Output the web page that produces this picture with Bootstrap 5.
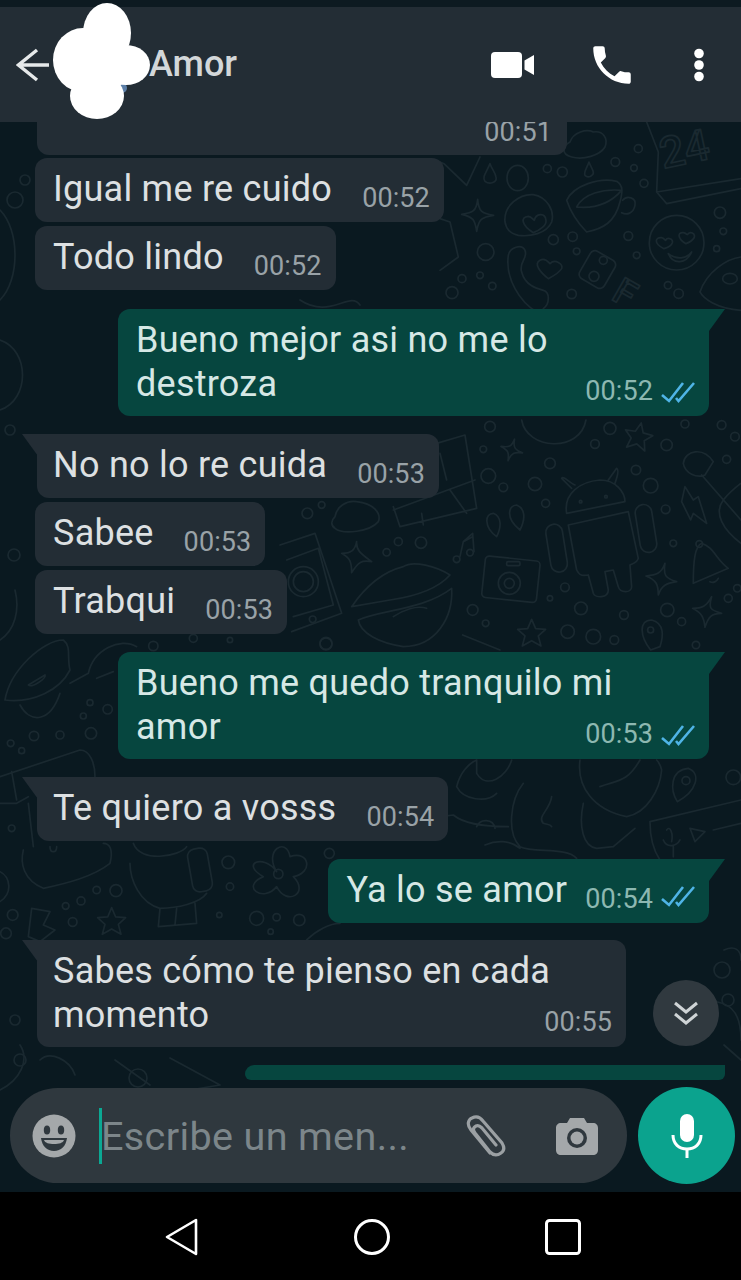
<!DOCTYPE html>
<html lang="es">
<head>
  <meta charset="UTF-8" />
  <meta name="viewport" content="width=device-width, initial-scale=1.0" />
  <title>Amor</title>
  <link href="https://cdn.jsdelivr.net/npm/bootstrap@5.3.3/dist/css/bootstrap.min.css" rel="stylesheet" />
  <style>
    body { margin: 0; background: #000; font-family: Roboto, "Liberation Sans", sans-serif; }
    .screen { width: 741px; height: 1280px; }
    .status-strip { height: 7px; background: #0d1a21; flex: none; }
    .chat-head { height: 115px; background: #232d35; flex: none; padding: 0 36px 0 16px; z-index: 3; }
    .chat-name { font-size: 36px; font-weight: 500; color: #d3d7d9; margin-left: 99px; line-height: 1; padding-bottom: 2px; }
    .head-icons { gap: 52px; }
    .blob { left: 0; top: -7px; z-index: 4; }
    .chat-area { background: #0a1920; flex: 1 1 auto; min-height: 0; }
    .wall { left: 0; top: 0; }
    .wall * { vector-effect: non-scaling-stroke; }
    .wall-lines { fill: none; stroke: #1a2930; stroke-width: 1.7; stroke-linejoin: round; stroke-linecap: round; }
    .wall-label { font-family: Roboto, sans-serif; font-weight: 500; fill: none; stroke: #1a2930; stroke-width: 1.7; }
    .msg-list { z-index: 1; }
    .bubble { color: #dde0e2; background: #232d35; border-radius: 12px; height: 64px; font-size: 36px; line-height: 44px; padding: 9px 14px 0 18px; margin-left: 35px; width: fit-content; flex: none; position: relative; letter-spacing: .25px; white-space: nowrap; }
    .bubble-out { background: #06463f; color: #d6e8e5; margin-left: auto; margin-right: 32px; }
    .bubble-tall { height: 107px; white-space: normal; }
    .bubble-in-first { margin-left: 37px; padding-left: 16px; border-top-left-radius: 0; }
    .bubble-out.bubble-first { border-top-right-radius: 0; }
    .bubble-in-first::before { content: ""; position: absolute; left: -15px; top: 0; border-top: 22px solid #232d35; border-left: 16px solid transparent; }
    .bubble-out.bubble-first::after { content: ""; position: absolute; right: -16px; top: 0; border-top: 22px solid #06463f; border-right: 16px solid transparent; }
    .msg-time { font-size: 27px; line-height: 30px; color: #99a2a7; letter-spacing: .1px; margin-left: 30px; padding-top: 16px; }
    .bubble-out .msg-time { color: #8db8b1; }
    .time-close { margin-left: 18px; }
    .msg-foot { margin-top: -30px; }
    .msg-foot .msg-time { padding-top: 0; }
    .ticks { margin-left: 8px; margin-top: 17px; }
    .msg-foot .ticks { margin-top: 5px; }
    .cut-top { height: 33px; margin-left: 37px; width: 530px; border-top-left-radius: 0; border-top-right-radius: 0; padding: 0 15px 0 0; }
    .cut-top .msg-time { padding-top: 0; line-height: 20px; }
    .peek { height: 15px; width: 480px; background: #06463f; margin: 0 16px 0 auto; border-radius: 12px 0 8px 8px; flex: none; }
    .gap-3px { margin-top: 3px; }
    .gap-4px { margin-top: 4px; }
    .gap-19 { margin-top: 19px; }
    .gap-18 { margin-top: 18px; }
    .gap-17 { margin-top: 17px; }
    .down-btn { width: 66px; height: 66px; background: #30393f; right: 22px; top: 858px; z-index: 2; }
    .composer { left: 10px; right: 6px; top: 966px; z-index: 2; }
    .composer-box { height: 95px; width: 617px; background: #2f383e; border-radius: 48px; padding: 0 29px 0 22px; }
    .caret-bar { width: 3px; height: 56px; background: #0ba893; margin-left: 23px; flex: none; }
    .hint { font-size: 39.6px; color: #7c868a; line-height: 1; letter-spacing: .35px; flex: 1 1 auto; white-space: nowrap; margin-top: 2px; margin-left: -1px; }
    .mic-btn { width: 97px; height: 97px; background: #0ba38e; margin-left: auto; margin-top: -1px; }
    .nav-strip { height: 88px; background: #000; flex: none; padding-top: 1px; }
    .nav-gap { gap: 155px; padding-left: 4px; }
  </style>
</head>
<body>
  <div class="screen position-relative overflow-hidden d-flex flex-column">
    <div class="status-strip"></div>

    <header class="chat-head position-relative d-flex align-items-center justify-content-between">
      <div class="d-flex align-items-center">
        <svg width="34" height="34" viewBox="0 0 34 34" fill="none" stroke="#e6e9ea" stroke-width="3.4"><path d="M33 17H3M21 2 2.500 17 21 32"/></svg>
        <span class="chat-name">Amor</span>
      </div>
      <div class="head-icons d-flex align-items-center">
        <svg width="44" height="28" viewBox="0 0 44 28" fill="#fff"><rect x="0" y="1" width="31" height="26" rx="4"/><path d="M33.500 9.500 43 4V24L33.500 18.500Z"/></svg>
        <svg width="50" height="50" viewBox="0 0 24 24" fill="#fff"><path d="M6.620 10.790c1.440 2.830 3.760 5.140 6.590 6.590l2.200-2.200c.27-.27.670-.36 1.020-.24 1.120.37 2.330.57 3.570.57.550 0 1 .45 1 1V20c0 .55-.45 1-1 1C10.610 21 3 13.390 3 4c0-.55.450-1 1-1h3.500c.55 0 1 .45 1 1 0 1.250.2 2.450.57 3.570.11.350.03.740-.25 1.020z"/></svg>
        <svg class="ms-1" width="12" height="34" viewBox="0 0 12 34" fill="#fff"><circle cx="6" cy="5.500" r="4.800"/><circle cx="6" cy="17" r="4.800"/><circle cx="6" cy="28.500" r="4.800"/></svg>
      </div>
      <svg class="blob position-absolute" width="160" height="122" viewBox="0 0 160 122" fill="#fff">
        <circle cx="122" cy="88" r="5" fill="#5c7fa8"/>
        <ellipse cx="107" cy="33" rx="24" ry="30"/>
        <ellipse cx="83" cy="60" rx="30" ry="32"/>
        <ellipse cx="126" cy="65" rx="24" ry="20"/>
        <ellipse cx="97" cy="96" rx="27" ry="23"/>
        <ellipse cx="100" cy="65" rx="28" ry="30"/>
      </svg>
    </header>

    <main class="chat-area position-relative overflow-hidden">
      <svg class="wall position-absolute" width="741" height="1070" viewBox="0 122 741 1070" aria-hidden="true">
        <defs>
          <path id="star-four" d="M0-48C3-12 12-5 48 0 12 5 3 12-3 48-8 12-14 5-48-3-14-8-4-12 0-48Z"/>
          <path id="star-five" d="M0-42 12-14 42-12 20 8 28 38 0 22-28 38-20 8-42-12-12-14Z"/>
        </defs>
        <g class="wall-lines" transform="translate(440 122) scale(.3333)">
          <path d="M390 60C400 30 440 20 460 30 490 25 505 50 495 75 480 100 430 115 395 105 360 95 370 70 390 60Z"/>
          <path d="M150 125C140 150 125 165 135 178 150 190 172 180 168 165 165 150 155 140 150 125Z"/>
          <path d="M447 120C440 140 430 150 435 160 445 170 462 160 460 150 458 140 450 130 447 120Z"/>
          <ellipse cx="233" cy="168" rx="32" ry="38"/>
          <circle cx="322" cy="140" r="12"/><circle cx="367" cy="150" r="15"/><circle cx="526" cy="120" r="13"/><circle cx="595" cy="80" r="12"/><circle cx="582" cy="138" r="10"/><circle cx="612" cy="184" r="12"/><circle cx="840" cy="272" r="17"/><circle cx="850" cy="328" r="10"/><circle cx="830" cy="380" r="9"/><circle cx="590" cy="400" r="10"/><circle cx="565" cy="342" r="13"/><circle cx="398" cy="344" r="14"/><circle cx="340" cy="353" r="15"/><circle cx="410" cy="388" r="10"/><circle cx="137" cy="390" r="25"/><circle cx="66" cy="470" r="12"/><circle cx="120" cy="460" r="10"/><circle cx="157" cy="492" r="11"/><circle cx="36" cy="512" r="18"/><circle cx="395" cy="516" r="14"/><circle cx="684" cy="490" r="11"/><circle cx="716" cy="515" r="14"/>
          <use href="#star-four" transform="translate(113 280)"/>
          <path d="M195 300C190 250 240 215 280 218 320 225 345 265 335 300 320 335 270 345 235 340 210 335 198 320 195 300Z"/>
          <path d="M280 332C245 310 240 285 265 283 275 283 280 295 283 295 287 275 315 270 318 295 320 310 300 325 280 332Z"/>
          <path d="M380 235C400 190 480 165 530 178 550 190 548 210 540 240 525 300 490 320 440 330 420 310 395 280 380 235Z"/>
          <path d="M410 255C430 215 490 200 545 205M410 255C460 260 510 245 545 205M548 235C560 220 590 225 585 250 580 275 560 280 545 272"/>
          <text class="wall-label" x="670" y="140" font-size="130" transform="rotate(-12 670 140)">24</text>
          <path d="M620 0 655 90 650 210 680 245 903 200M650 210 903 170"/>
          <circle cx="710" cy="362" r="82"/>
          <path d="M672 380C640 365 645 345 665 347 672 348 675 355 677 355 682 345 700 350 697 362 694 372 684 376 672 380ZM738 365C712 350 712 330 730 332 738 333 740 338 742 338 750 325 768 335 762 348 757 357 750 360 738 365ZM685 395C710 415 740 410 755 390 740 425 700 430 685 395Z"/>
          <path d="M205 400C210 375 245 365 255 385 265 410 235 420 245 450 255 490 290 500 310 505 330 510 330 545 310 560M205 400C195 470 240 540 290 570"/>
          <path d="M325 470C300 450 280 425 300 415 315 405 325 420 330 425 345 410 370 425 365 440 355 455 340 462 325 470Z"/>
          <rect x="430" y="395" width="85" height="95" rx="16" transform="rotate(30 472 442)"/>
          <circle cx="490" cy="415" r="12"/><circle cx="462" cy="463" r="15"/>
          <text class="wall-label" x="510" y="530" font-size="110" transform="rotate(30 510 530)">F</text>
          <path d="M780 510C800 450 860 410 903 405M780 510C790 530 830 560 903 565"/>
          <ellipse cx="870" cy="470" rx="22" ry="16"/>
          <path d="M0 120 12 125 80 190 120 105M0 290 30 300 55 405 0 445"/>
        </g>
        <g class="wall-lines" transform="translate(280 420) scale(.3333)">
          <path d="M470 70 555 45 590 265 360 320 340 260M340 270 585 180M510 210 560 280M480 100 500 180M425 280 430 315"/>
          <path d="M725 0C740 90 900 100 918 0"/>
          <circle cx="630" cy="20" r="16"/><circle cx="990" cy="25" r="18"/><circle cx="945" cy="72" r="13"/><circle cx="1160" cy="75" r="17"/><circle cx="1325" cy="15" r="13"/><circle cx="1365" cy="50" r="13"/><circle cx="1340" cy="118" r="12"/><circle cx="1215" cy="12" r="12"/><circle cx="810" cy="130" r="16"/><circle cx="625" cy="168" r="22"/><circle cx="670" cy="202" r="13"/><circle cx="765" cy="192" r="20"/><circle cx="1068" cy="150" r="14"/><circle cx="1112" cy="197" r="22"/><circle cx="797" cy="250" r="12"/><circle cx="1157" cy="268" r="13"/><circle cx="610" cy="88" r="10"/><circle cx="82" cy="280" r="16"/><circle cx="125" cy="255" r="10"/><circle cx="355" cy="365" r="12"/><circle cx="423" cy="368" r="17"/><circle cx="320" cy="397" r="11"/><circle cx="1180" cy="370" r="10"/><circle cx="855" cy="502" r="13"/><circle cx="810" cy="535" r="8"/><circle cx="903" cy="565" r="19"/><circle cx="578" cy="570" r="16"/><circle cx="617" cy="610" r="10"/><circle cx="1032" cy="585" r="13"/><circle cx="1162" cy="570" r="20"/><circle cx="1205" cy="605" r="12"/><circle cx="1345" cy="535" r="12"/><circle cx="863" cy="635" r="20"/><circle cx="940" cy="650" r="22"/><circle cx="1003" cy="660" r="13"/><circle cx="1248" cy="675" r="11"/><circle cx="138" cy="670" r="18"/><circle cx="1372" cy="505" r="11"/>
          <use href="#star-four" transform="translate(695 90) rotate(15) scale(.7)"/>
          <use href="#star-five" transform="translate(1075 50) rotate(12)"/>
          <use href="#star-five" transform="translate(755 640)"/>
          <path d="M230 365C228 390 240 400 275 425 245 420 235 425 215 458 215 425 210 415 185 400 215 400 225 390 230 365ZM1155 430C1150 465 1155 475 1190 485 1160 490 1145 495 1135 525 1135 495 1130 480 1098 468 1130 465 1145 460 1155 430ZM1295 530C1285 565 1290 570 1325 580 1295 580 1285 590 1275 622 1272 590 1265 580 1238 565 1265 565 1280 560 1295 530Z"/>
          <path d="M860 280C850 220 900 185 960 180 1010 180 1035 220 1035 245ZM875 205 845 175C850 165 870 190 885 195M985 180 1010 145C1020 150 1010 175 1005 190"/>
          <circle cx="902" cy="245" r="4"/><circle cx="978" cy="230" r="4"/>
          <path d="M865 315 1045 275 1075 415C1070 430 1060 430 1050 435L1055 500C1055 520 1020 520 1015 500L1000 450 975 455 985 510C985 535 945 535 940 520L925 465C900 470 895 460 890 450Z"/>
          <rect x="805" y="312" width="50" height="145" rx="25" transform="rotate(-9 830 385)"/>
          <rect x="1073" y="253" width="50" height="145" rx="25" transform="rotate(-9 1098 325)"/>
          <path d="M640 280C615 280 610 320 650 350 665 320 665 290 640 280ZM710 255C685 255 675 295 720 330 738 295 735 265 710 255Z"/>
          <path d="M540 410 550 365 578 340 582 395M550 365 578 350"/><circle cx="530" cy="418" r="10"/><circle cx="570" cy="398" r="10"/>
          <rect x="610" y="415" width="165" height="125" rx="12" transform="rotate(6 690 480)"/>
          <circle cx="688" cy="490" r="33"/><circle cx="688" cy="490" r="15"/>
          <rect x="680" y="425" width="40" height="12" rx="4"/>
          <path d="M0 375 105 340 185 580 35 635M20 420 115 385 160 555 40 590"/><circle cx="70" cy="485" r="45"/><circle cx="70" cy="485" r="30"/><circle cx="98" cy="598" r="10"/>
          <path d="M215 560C270 480 330 450 370 440 400 420 470 440 510 465 470 510 400 530 330 540ZM235 600C300 570 430 570 515 505 520 590 470 680 370 680 300 670 240 640 235 600ZM340 590C370 570 410 555 440 565"/>
          <path d="M1240 490C1240 420 1245 380 1265 370 1300 380 1310 420 1345 445ZM1290 485C1300 490 1310 485 1315 475"/><circle cx="1258" cy="372" r="10"/>
          <path d="M1205 245 1215 200 1240 240 1255 230 1280 310 1240 280 1232 300Z"/>
          <path d="M1210 130C1215 90 1270 80 1300 125L1275 165C1250 175 1215 160 1210 130ZM1265 165 1383 300M1383 370C1330 330 1300 280 1330 240 1350 215 1370 200 1383 190"/>
          <path d="M1112 690C1080 650 1075 600 1115 600 1155 610 1150 650 1140 680Z"/><circle cx="1112" cy="630" r="9"/>
          <path d="M165 290C170 260 200 240 230 245 280 250 305 280 295 305 270 335 190 345 165 325 150 315 155 300 165 290Z"/>
          <path d="M548 645 660 690"/>
        </g>
        <g class="wall-lines" transform="translate(0 630) scale(.3333)">
          <path d="M15 210C30 120 130 30 190 30 215 50 200 80 210 120 180 180 100 220 15 210ZM85 165 135 135C140 145 95 175 85 165ZM60 225C90 280 150 280 180 190M265 130C280 60 360 20 410 50M265 130 210 160M290 145 340 125"/>
          <circle cx="460" cy="48" r="14"/><circle cx="690" cy="30" r="8"/><circle cx="580" cy="25" r="12"/><circle cx="978" cy="42" r="18"/><circle cx="270" cy="218" r="9"/><circle cx="323" cy="238" r="14"/><circle cx="250" cy="258" r="9"/><circle cx="273" cy="310" r="17"/><circle cx="102" cy="318" r="14"/><circle cx="180" cy="315" r="12"/><circle cx="32" cy="340" r="10"/><circle cx="65" cy="362" r="9"/><circle cx="35" cy="595" r="10"/><circle cx="685" cy="697" r="19"/><circle cx="690" cy="770" r="11"/><circle cx="290" cy="780" r="11"/><circle cx="348" cy="782" r="18"/><circle cx="197" cy="828" r="10"/><circle cx="243" cy="813" r="12"/><circle cx="218" cy="876" r="13"/><circle cx="38" cy="855" r="16"/><circle cx="18" cy="910" r="16"/><circle cx="658" cy="855" r="8"/><circle cx="770" cy="865" r="21"/><circle cx="830" cy="862" r="11"/><circle cx="898" cy="870" r="17"/><circle cx="812" cy="905" r="8"/><circle cx="988" cy="670" r="15"/>
          <path d="M0 440 240 360C270 360 285 400 285 440M35 425 50 510M0 520 50 520 85 500M85 520 100 650"/>
          <path d="M70 660C60 700 70 750 130 775 200 760 280 740 330 700 340 660 330 640 310 640M150 650C150 670 170 670 170 650"/>
          <path d="M400 640C420 700 540 680 560 650M390 700C390 750 420 820 480 835 530 835 600 820 620 790M480 835 475 890 590 880 585 820M530 835 525 885"/>
          <rect x="570" y="655" width="60" height="130" rx="22" transform="rotate(-10 600 720)"/>
          <path d="M830 725C790 660 860 620 870 680 930 660 940 730 880 740 930 790 860 830 830 770 790 820 720 770 790 740 720 700 790 670 830 725Z"/><circle cx="835" cy="732" r="14"/>
          <use href="#star-five" transform="translate(335 875)"/>
          <path d="M95 835 150 845 130 885 165 900 120 935 85 920Z"/>
          <path d="M0 725C30 740 40 790 0 815M920 930C950 900 990 880 1020 880"/>
        </g>
        <g class="wall-lines" transform="translate(440 760) scale(.3333)">
          <path d="M110 0 110 40C140 90 200 50 215 0M50 80C60 40 85 10 110 0M50 80C70 120 140 130 170 100"/>
          <path d="M420 0C410 80 460 150 560 170 620 160 660 90 665 30 660 10 655 5 650 0M480 80C530 60 560 70 600 0"/>
          <path d="M0 170 40 165C70 190 120 200 205 200M110 200C120 175 160 175 165 205M250 70C210 120 200 220 240 260 280 280 380 260 410 295M135 255C170 240 210 240 240 265"/>
          <path d="M335 110C330 150 290 170 310 190 320 195 330 190 335 200M430 130C415 200 430 260 470 265L520 260 585 205"/>
          <path d="M712 125C690 90 690 30 745 25 785 40 770 95 712 125Z"/><circle cx="738" cy="62" r="12"/><circle cx="880" cy="52" r="22"/>
          <path d="M630 185 903 120M630 185C630 230 640 270 660 300M820 210 903 190M750 205 795 215 765 245ZM680 210C690 195 700 220 695 245M670 240C680 265 710 260 720 240M700 260V290"/>
        </g>
        <g class="wall-lines">
          <path d="M0 210C20 230 20 280 0 300M0 340C30 350 30 400 0 410M300 300C330 320 350 290 360 305M0 1090C20 1080 30 1060 20 1045M0 640C15 630 20 610 15 590"/>
          <circle cx="15" cy="200" r="8"/><circle cx="25" cy="180" r="5"/><circle cx="10" cy="430" r="5"/><circle cx="14" cy="555" r="6"/><circle cx="15" cy="1020" r="5"/><circle cx="20" cy="1060" r="6"/><circle cx="138" cy="1078" r="9"/>
          <path d="M40 1060C50 1050 70 1060 75 1075M115 1060 150 1085M170 1058 220 1085 190 1090"/>
          <path d="M698 1000C730 1000 741 1010 741 1040M724 1045 741 1060M724 950C735 945 741 950 741 960"/>
          <circle cx="728" cy="1000" r="6"/><circle cx="722" cy="970" r="8"/>
        </g>
      </svg>

      <div class="msg-list position-relative d-flex flex-column">
        <div class="bubble cut-top d-flex justify-content-end"><span class="msg-time">00:51</span></div>
        <div class="bubble d-flex gap-3px"><span>Igual me re cuido</span><span class="msg-time">00:52</span></div>
        <div class="bubble d-flex gap-4px"><span>Todo lindo</span><span class="msg-time">00:52</span></div>

        <div class="bubble bubble-out bubble-first bubble-tall gap-19" style="width:591px">
          <div>Bueno mejor asi no me lo destroza</div>
          <div class="msg-foot d-flex justify-content-end"><span class="msg-time">00:52</span>
            <svg class="ticks" width="34" height="22" viewBox="0 0 34 22" fill="none" stroke="#4fb4e6" stroke-width="2.600"><path d="M1 14 8 20 22 2M15 17 17.500 20 33 2"/></svg>
          </div>
        </div>

        <div class="bubble bubble-in-first d-flex gap-18"><span>No no lo re cuida</span><span class="msg-time">00:53</span></div>
        <div class="bubble d-flex gap-4px"><span>Sabee</span><span class="msg-time">00:53</span></div>
        <div class="bubble d-flex gap-4px"><span>Trabqui</span><span class="msg-time">00:53</span></div>

        <div class="bubble bubble-out bubble-first bubble-tall gap-18" style="width:591px">
          <div>Bueno me quedo tranquilo mi amor</div>
          <div class="msg-foot d-flex justify-content-end"><span class="msg-time">00:53</span>
            <svg class="ticks" width="34" height="22" viewBox="0 0 34 22" fill="none" stroke="#4fb4e6" stroke-width="2.600"><path d="M1 14 8 20 22 2M15 17 17.500 20 33 2"/></svg>
          </div>
        </div>

        <div class="bubble bubble-in-first d-flex gap-18"><span>Te quiero a vosss</span><span class="msg-time">00:54</span></div>

        <div class="bubble bubble-out bubble-first d-flex gap-18"><span>Ya lo se amor</span><span class="msg-time time-close">00:54</span>
          <svg class="ticks" width="34" height="22" viewBox="0 0 34 22" fill="none" stroke="#4fb4e6" stroke-width="2.600"><path d="M1 14 8 20 22 2M15 17 17.500 20 33 2"/></svg>
        </div>

        <div class="bubble bubble-in-first bubble-tall gap-17" style="width:589px">
          <div>Sabes cómo te pienso en cada momento</div>
          <div class="msg-foot d-flex justify-content-end"><span class="msg-time">00:55</span></div>
        </div>

        <div class="peek gap-18"></div>
      </div>

      <button type="button" class="down-btn btn rounded-circle position-absolute p-0 border-0 d-flex align-items-center justify-content-center" aria-label="Bajar">
        <svg width="26" height="26" viewBox="0 0 26 26" fill="none" stroke="#cfd4d6" stroke-width="3"><path d="M2 3 13 12 24 3M2 14 13 23 24 14"/></svg>
      </button>

      <div class="composer position-absolute d-flex">
        <div class="composer-box d-flex align-items-center">
          <svg class="flex-shrink-0" width="44" height="44" viewBox="0 0 44 44"><circle cx="22" cy="22" r="21.500" fill="#a4a8aa"/><ellipse cx="15" cy="16" rx="3.200" ry="4.500" fill="#2f383e"/><ellipse cx="29" cy="16" rx="3.200" ry="4.500" fill="#2f383e"/><path d="M9 24H35C34 32 29 37 22 37 15 37 10 32 9 24Z" fill="#2f383e"/><path d="M12 26H32C31 29 27 30 22 30 17 30 13 29 12 26Z" fill="#a4a8aa"/></svg>
          <span class="caret-bar"></span>
          <span class="hint">Escribe un men...</span>
          <svg class="me-5" width="46" height="42" viewBox="0 0 46 42" fill="none" stroke="#9ba0a3" stroke-width="3.200" stroke-linecap="round"><path d="M28 38 9 15C4 9 7 4 10 3 14 1 18 2 21 6L40 28C43 33 42 36 39 38 35 41 31 40 28 37L13 18C10 14 12 12 14 11 16 10 18 11 20 13L34 30"/></svg>
          <svg width="42" height="38" viewBox="0 0 42 38" fill="#a4a8aa"><path d="M5 6H11L14 1H28L31 6H37C40 6 42 8 42 11V33C42 36 40 38 37 38H5C2 38 0 36 0 33V11C0 8 2 6 5 6Z"/><circle cx="21" cy="21" r="10" fill="#2f383e"/><circle cx="21" cy="21" r="6.500" fill="#a4a8aa"/></svg>
        </div>
        <button type="button" class="mic-btn btn rounded-circle p-0 border-0 d-flex align-items-center justify-content-center" aria-label="Grabar">
          <svg width="32" height="44" viewBox="0 0 32 44" fill="#fff"><rect x="9" y="0" width="14" height="28" rx="7"/><path d="M2 21C2 30 8 35 16 35 24 35 30 30 30 21" fill="none" stroke="#fff" stroke-width="3"/><rect x="14.500" y="34" width="3" height="10"/></svg>
        </button>
      </div>
    </main>

    <nav class="nav-strip d-flex align-items-center justify-content-center nav-gap">
      <svg width="34" height="38" viewBox="0 0 34 38" fill="none" stroke="#fff" stroke-width="2.600" stroke-linejoin="round"><path d="M31 2V36L2 19Z"/></svg>
      <svg width="36" height="36" viewBox="0 0 36 36" fill="none" stroke="#fff" stroke-width="3"><circle cx="18" cy="18" r="16.500"/></svg>
      <svg width="36" height="36" viewBox="0 0 36 36" fill="none" stroke="#fff" stroke-width="3"><rect x="1.500" y="1.500" width="33" height="33" rx="3"/></svg>
    </nav>
  </div>
  <script src="https://cdn.jsdelivr.net/npm/bootstrap@5.3.3/dist/js/bootstrap.bundle.min.js"></script>
</body>
</html>
